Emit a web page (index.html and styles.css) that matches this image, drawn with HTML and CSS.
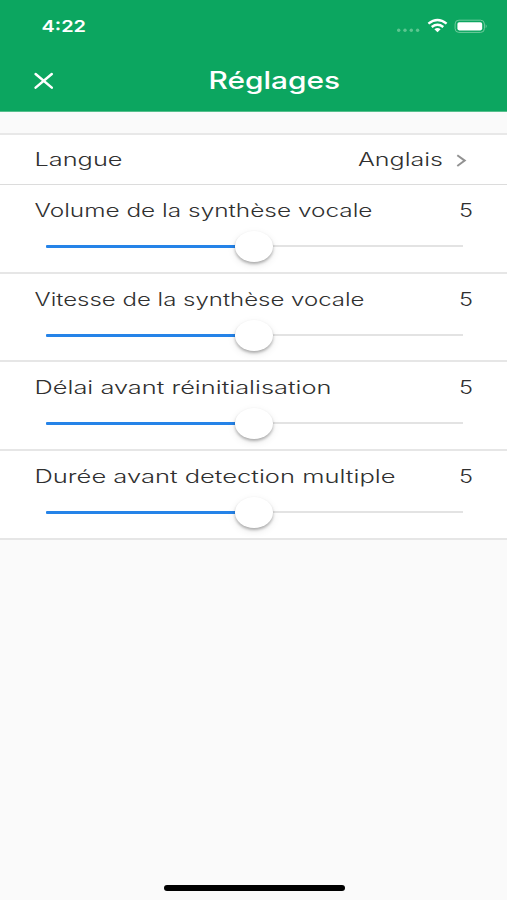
FILE: index.html
```html
<!DOCTYPE html>
<html lang="fr">
<head>
<meta charset="utf-8">
<title>Réglages</title>
<link rel="stylesheet" href="styles.css">
</head>
<body>
<div class="screen">
  <header class="header">
    <div class="status">
      <svg class="time" width="46" height="24"><text x="0.5" y="18.3" textLength="44.5" lengthAdjust="spacingAndGlyphs">4:22</text></svg>
      <svg class="indicators" width="92" height="24" viewBox="0 0 92 24">
        <g fill="#5cc690"><circle cx="3.7" cy="16.2" r="1.7"/><circle cx="10" cy="16.2" r="1.7"/><circle cx="16.3" cy="16.2" r="1.7"/><circle cx="22.6" cy="16.2" r="1.7"/></g>
        <g fill="none" stroke="#fff" stroke-width="2.4"><path d="M33.4 9.6Q42.5 2.4 51.6 9.6"/><path d="M36.7 13Q42.5 8.6 48.3 13"/></g>
        <path d="M39.4 15.2Q42.5 13 45.6 15.2L42.5 18.2Z" fill="#fff"/>
        <rect x="60.1" y="6.2" width="29.3" height="12.2" rx="3.8" fill="none" stroke="#6fcb9d"/>
        <rect x="62.4" y="8.2" width="24.8" height="8.2" rx="1.8" fill="#fff"/>
        <path d="M90.7 10.2Q92.7 12.2 90.7 14.2Z" fill="#6fcb9d"/>
      </svg>
    </div>
    <div class="navbar">
      <svg class="close" width="21" height="18" viewBox="0 0 21 18"><path d="M2.6 2L18.8 15.6M18.8 2L2.6 15.6"/></svg>
      <svg class="title" width="134" height="34"><text x="0.5" y="24.4" textLength="131.5" lengthAdjust="spacingAndGlyphs">Réglages</text></svg>
    </div>
  </header>
  <main class="settings">
    <section class="row language">
      <svg width="90" height="24"><text x="-1.5" y="17" textLength="88" lengthAdjust="spacingAndGlyphs">Langue</text></svg>
      <div class="value">
        <svg width="86" height="24"><text x="0" y="17" textLength="85" lengthAdjust="spacingAndGlyphs">Anglais</text></svg>
        <svg class="chevron" width="12" height="14" viewBox="0 0 12 14"><path d="M1.3 1.2L8.7 6.6L1.3 12"/></svg>
      </div>
    </section>
    <section class="row">
      <div class="label">
        <svg width="340" height="24"><text x="-1.5" y="17" textLength="338" lengthAdjust="spacingAndGlyphs">Volume de la synthèse vocale</text></svg>
        <svg width="14" height="24"><text x="0" y="17" textLength="14" lengthAdjust="spacingAndGlyphs">5</text></svg>
      </div>
      <div class="slider"><div class="fill"></div><div class="thumb"></div><div class="rest"></div></div>
    </section>
    <section class="row short">
      <div class="label">
        <svg width="340" height="24"><text x="-1.5" y="16.5" textLength="330" lengthAdjust="spacingAndGlyphs">Vitesse de la synthèse vocale</text></svg>
        <svg width="14" height="24"><text x="0" y="16.5" textLength="14" lengthAdjust="spacingAndGlyphs">5</text></svg>
      </div>
      <div class="slider"><div class="fill"></div><div class="thumb"></div><div class="rest"></div></div>
    </section>
    <section class="row">
      <div class="label">
        <svg width="340" height="24"><text x="-1.5" y="17" textLength="297" lengthAdjust="spacingAndGlyphs">Délai avant réinitialisation</text></svg>
        <svg width="14" height="24"><text x="0" y="17" textLength="14" lengthAdjust="spacingAndGlyphs">5</text></svg>
      </div>
      <div class="slider"><div class="fill"></div><div class="thumb"></div><div class="rest"></div></div>
    </section>
    <section class="row">
      <div class="label">
        <svg width="364" height="24"><text x="-1.5" y="16.7" textLength="361" lengthAdjust="spacingAndGlyphs">Durée avant detection multiple</text></svg>
        <svg width="14" height="24"><text x="0" y="16.7" textLength="14" lengthAdjust="spacingAndGlyphs">5</text></svg>
      </div>
      <div class="slider"><div class="fill"></div><div class="thumb"></div><div class="rest"></div></div>
    </section>
  </main>
  <div class="home"></div>
</div>
</body>
</html>
```

FILE: styles.css
```css
* { box-sizing: border-box; }
body { margin: 0; font-family: Inter, "Liberation Sans", sans-serif; }
svg { display: block; flex: none; }
.screen {
  width: 507px;
  height: 900px;
  display: flex;
  flex-direction: column;
  background: #fafafa;
  overflow: hidden;
}
.header {
  height: 112px;
  flex: none;
  background: #0ca660;
  border-bottom: 1px solid #55bf8c;
}
.status {
  display: flex;
  justify-content: space-between;
  padding: 14px 20px 0 41px;
  height: 52px;
}
.indicators { overflow: visible; }
.header text { fill: #fff; font-weight: 600; }
.time text { font-size: 16.5px; }
.navbar { display: flex; align-items: center; padding-left: 33px; height: 58px; }
.close path { stroke: #fff; stroke-width: 2.5; stroke-linecap: round; }
.title { margin: 1px 0 0 154px; }
.title text { font-size: 24px; font-weight: 550; }
.settings {
  margin-top: 21px;
  border-top: 2px solid #e8e8e8;
}
.settings svg { overflow: visible; }
.settings text { font-size: 18px; font-weight: 350; fill: #303030; }
.row {
  height: 89px;
  background: #fff;
  border-bottom: 2px solid #e6e6e6;
  padding: 15px 34px 0 36px;
}
.row.short { height: 88px; }
.row.language {
  display: flex;
  justify-content: space-between;
  height: 50px;
  padding: 14px 39px 0 36px;
  border-bottom: 1px solid #dcdcdc;
}
.value { display: flex; }
.chevron { margin: 5px 0 0 12px; }
.chevron path { fill: none; stroke: #929292; stroke-width: 2; }
.label { display: flex; justify-content: space-between; }
.slider { display: flex; align-items: center; height: 31px; margin: 6.5px 10.5px 0 9.5px; }
.fill { width: 189.5px; height: 3px; border-radius: 1px 0 0 1px; background: #2583e8; }
.thumb {
  width: 38px;
  height: 31px;
  border-radius: 50%;
  background: #fff;
  box-shadow: 0 2px 3px rgba(0, 0, 0, .28), 0 3px 9px rgba(0, 0, 0, .09);
  z-index: 1;
}
.rest { flex: 1; height: 2px; background: #e3e3e3; }
.home { width: 181px; height: 6px; margin: auto 162px 9px 164px; border-radius: 3px; background: #000; }
```
